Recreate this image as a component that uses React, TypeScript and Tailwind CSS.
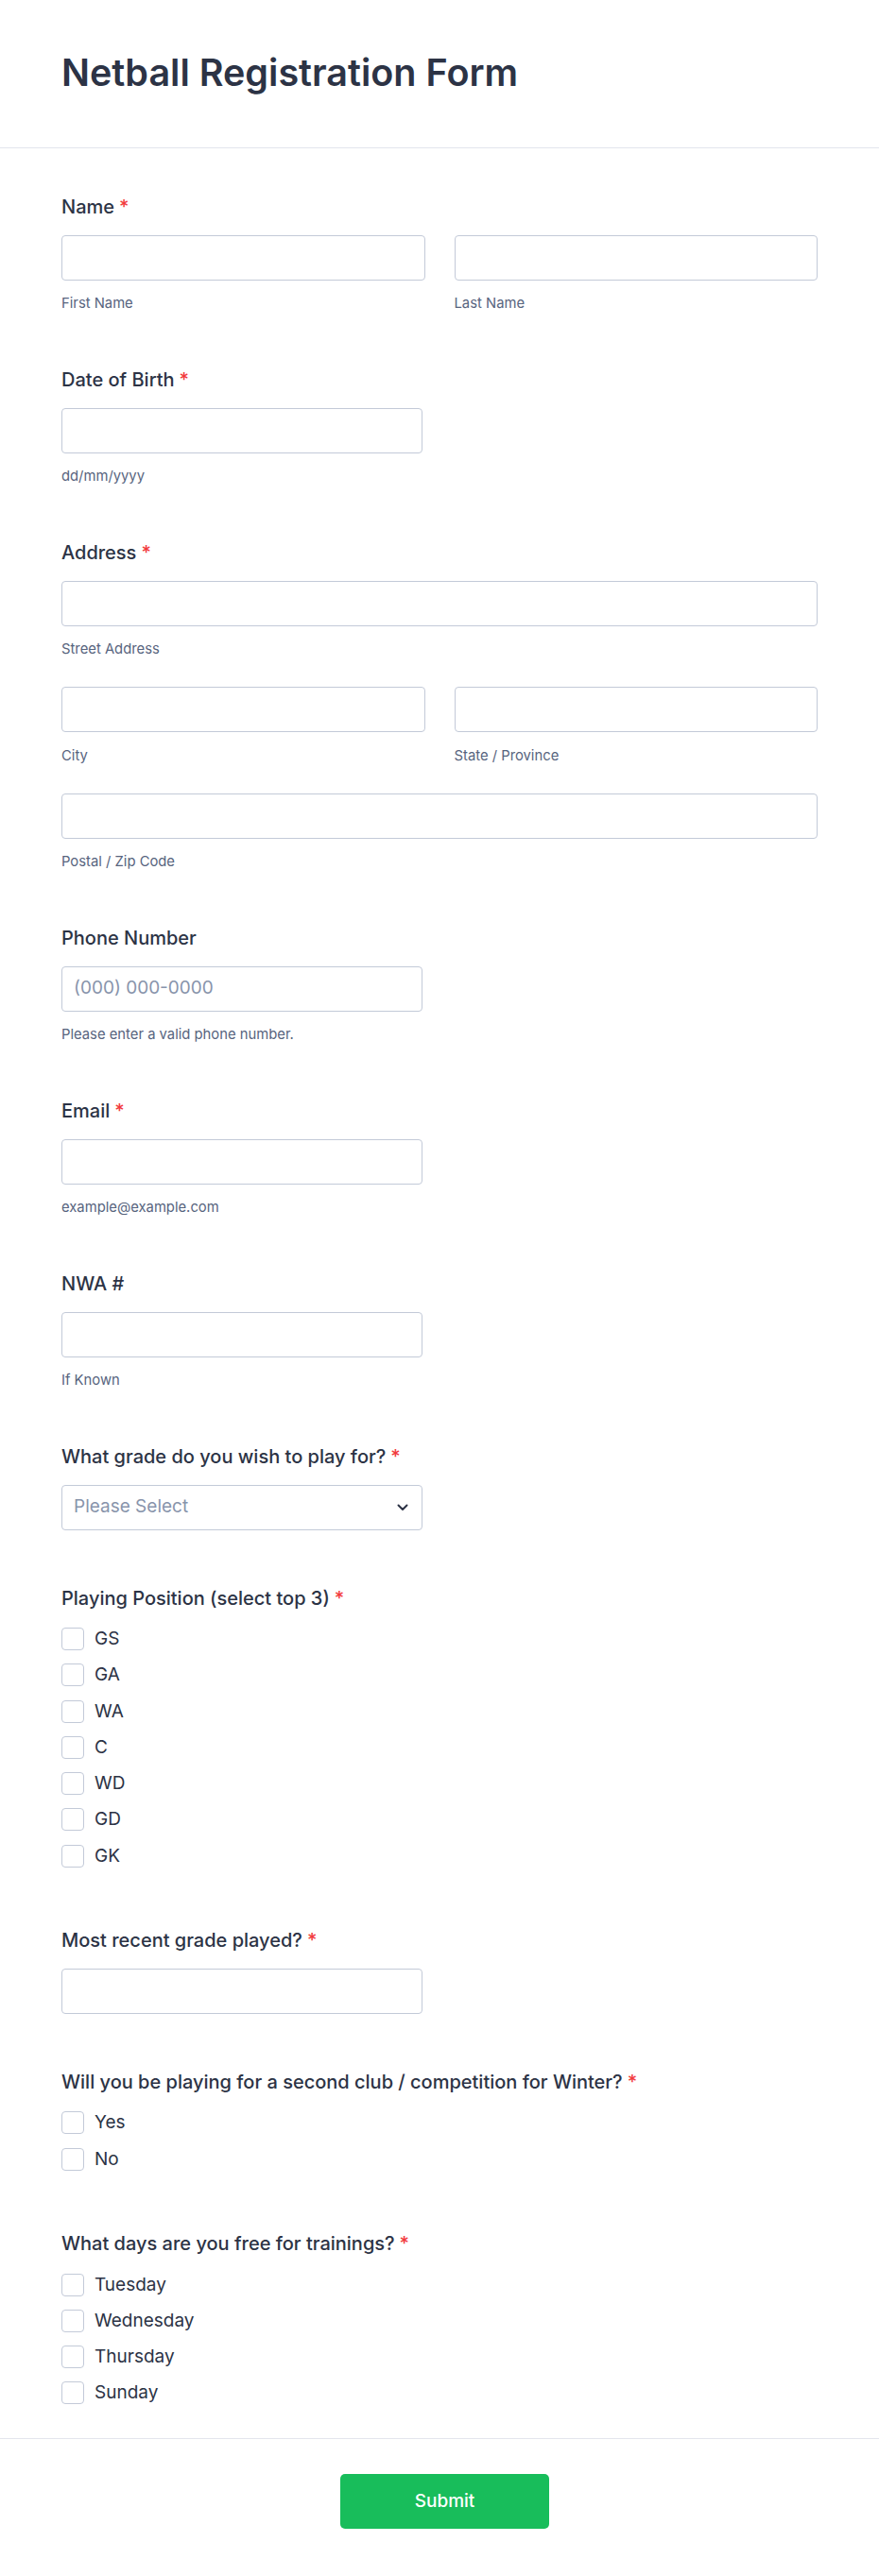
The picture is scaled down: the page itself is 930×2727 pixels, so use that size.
import React from "react";

const font = { fontFamily: "Inter, 'Noto Sans', sans-serif" };

function Label({ text, required }: { text: string; required?: boolean }) {
  return (
    <div className="text-[20px] leading-[24px] font-medium text-[#2c3345]">
      {text}
      {required && <span className="text-[#f23a3c] ml-[5px]">*</span>}
    </div>
  );
}

function Input({ className = "", placeholder }: { className?: string; placeholder?: string }) {
  return (
    <div
      className={`h-[48px] border border-[#c3cad8] rounded-[4px] bg-white flex items-center pl-[12px] text-[19px] text-[#8894ab] ${className}`}
    >
      {placeholder}
    </div>
  );
}

function Sub({ text }: { text: string }) {
  return <div className="mt-[15.5px] text-[14.8px] leading-[18px] text-[#57647e]">{text}</div>;
}

function Field({ children }: { children: React.ReactNode }) {
  return <div className="py-[30px]">{children}</div>;
}

function SingleField({
  label,
  required,
  sub,
  placeholder,
}: {
  label: string;
  required?: boolean;
  sub?: string;
  placeholder?: string;
}) {
  return (
    <Field>
      <Label text={label} required={required} />
      <div className="mt-[17.5px]">
        <Input className="w-[382px]" placeholder={placeholder} />
      </div>
      {sub && <Sub text={sub} />}
    </Field>
  );
}

function CheckList({ label, items }: { label: string; items: string[] }) {
  return (
    <Field>
      <Label text={label} required />
      <div className="mt-[19.5px] flex flex-col gap-[14.3px] pb-[5.5px]">
        {items.map((it) => (
          <div key={it} className="flex items-center h-[24px]">
            <div className="w-[24px] h-[24px] border border-[#c3cad8] rounded-[4px] bg-white shrink-0" />
            <span className="ml-[11px] text-[19px] leading-[24px] text-[#2c3345]">{it}</span>
          </div>
        ))}
      </div>
    </Field>
  );
}

export default function App() {
  return (
    <div className="w-[930px] bg-white" style={font}>
      <div className="px-[65px] pt-[54px] pb-[56px] border-b border-[#e3e5ed]">
        <h1 className="text-[39.5px] leading-[46px] font-semibold text-[#2c3345]">Netball Registration Form</h1>
      </div>
      <div className="px-[65px] pt-[20px] border-b border-[#e3e5ed]">
        <Field>
          <Label text="Name" required />
          <div className="mt-[17.5px] grid grid-cols-2 gap-x-[31px]">
            <div>
              <Input />
              <Sub text="First Name" />
            </div>
            <div>
              <Input />
              <Sub text="Last Name" />
            </div>
          </div>
        </Field>
        <SingleField label="Date of Birth" required sub="dd/mm/yyyy" />
        <Field>
          <Label text="Address" required />
          <div className="mt-[17.5px]">
            <Input />
            <Sub text="Street Address" />
          </div>
          <div className="mt-[31px] grid grid-cols-2 gap-x-[31px]">
            <div>
              <Input />
              <Sub text="City" />
            </div>
            <div>
              <Input />
              <Sub text="State / Province" />
            </div>
          </div>
          <div className="mt-[31px]">
            <Input />
            <Sub text="Postal / Zip Code" />
          </div>
        </Field>
        <SingleField label="Phone Number" sub="Please enter a valid phone number." placeholder="(000) 000-0000" />
        <SingleField label="Email" required sub="example@example.com" />
        <SingleField label="NWA #" sub="If Known" />
        <Field>
          <Label text="What grade do you wish to play for?" required />
          <div className="mt-[17.5px] w-[382px] h-[48px] border border-[#c3cad8] rounded-[4px] bg-white flex items-center justify-between pl-[12px] pr-[14px] text-[19px] text-[#8894ab]">
            <span>Please Select</span>
            <svg width="12" height="8" viewBox="0 0 12 8" fill="none">
              <path d="M1.5 1.5L6 6L10.5 1.5" stroke="#2c3345" strokeWidth="2" strokeLinecap="round" strokeLinejoin="round" />
            </svg>
          </div>
        </Field>
        <CheckList label="Playing Position (select top 3)" items={["GS", "GA", "WA", "C", "WD", "GD", "GK"]} />
        <Field>
          <Label text="Most recent grade played?" required />
          <div className="mt-[17.5px]">
            <Input className="w-[382px]" />
          </div>
        </Field>
        <CheckList label="Will you be playing for a second club / competition for Winter?" items={["Yes", "No"]} />
        <CheckList label="What days are you free for trainings?" items={["Tuesday", "Wednesday", "Thursday", "Sunday"]} />
      </div>
      <div className="pt-[37px] pb-[50px] pl-[11px] flex justify-center">
        <button className="w-[221px] h-[58px] rounded-[5px] bg-[#18bd5b] text-white text-[19px] font-medium">
          Submit
        </button>
      </div>
    </div>
  );
}
